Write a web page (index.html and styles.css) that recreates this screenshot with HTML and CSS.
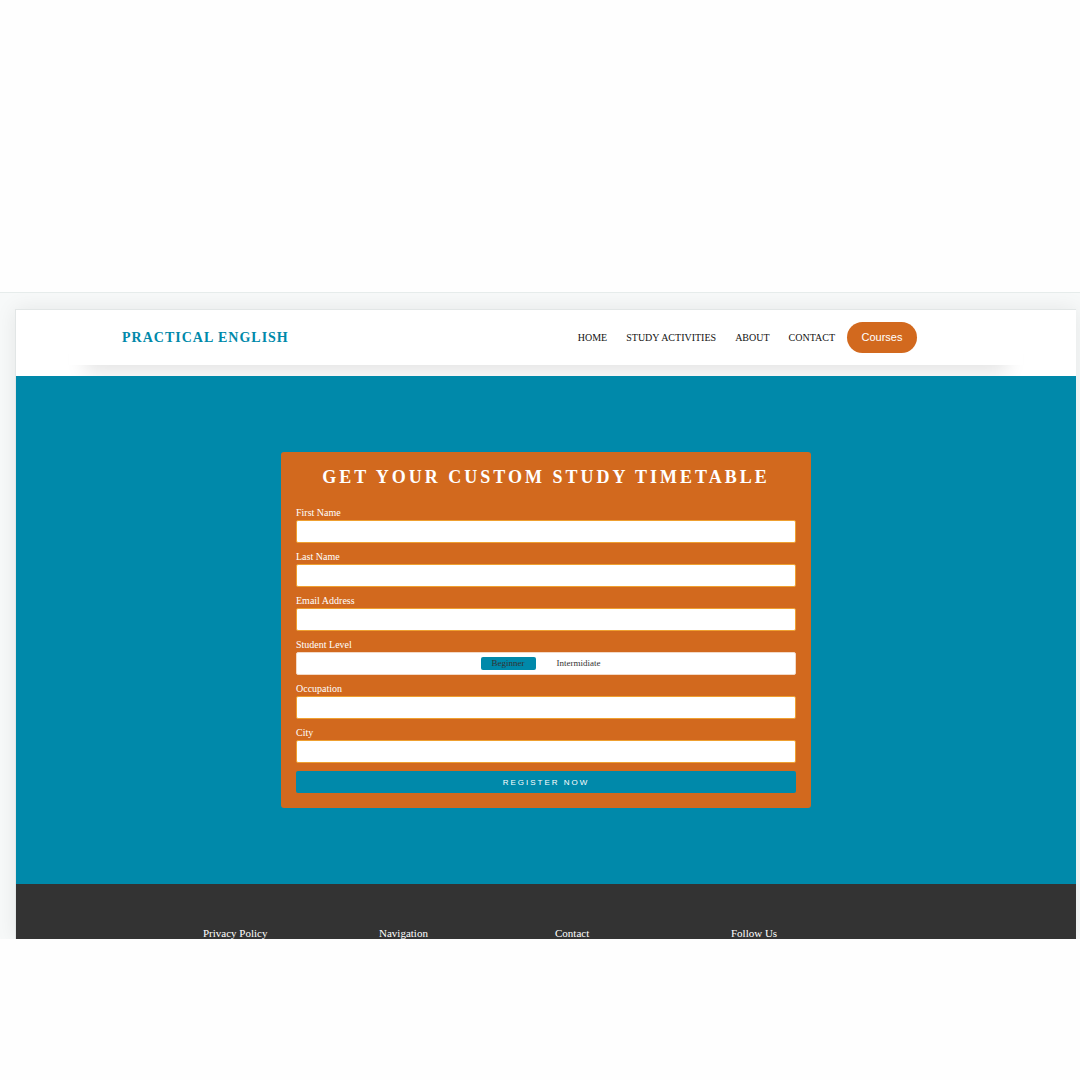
FILE: index.html
```html
<!DOCTYPE html>
<html lang="en">
<head>
  <meta charset="utf-8">
  <meta name="viewport" content="width=device-width, initial-scale=1">
  <title>Practical English</title>
  <link rel="stylesheet" href="styles.css">
</head>
<body>
  <div class="frame">
    <div class="site">
      <header class="header">
        <div class="navbar">
          <a class="logo" href="#">PRACTICAL ENGLISH</a>
          <nav class="menu">
            <a href="#">HOME</a>
            <a href="#">STUDY ACTIVITIES</a>
            <a href="#">ABOUT</a>
            <a href="#">CONTACT</a>
          </nav>
          <button class="courses" type="button">Courses</button>
        </div>
      </header>
      <main class="main">
        <form class="card">
          <h1 class="title">GET YOUR CUSTOM STUDY TIMETABLE</h1>
          <div class="field">
            <label for="first">First Name</label>
            <input class="box" id="first" type="text">
          </div>
          <div class="field">
            <label for="last">Last Name</label>
            <input class="box" id="last" type="text">
          </div>
          <div class="field">
            <label for="email">Email Address</label>
            <input class="box" id="email" type="email">
          </div>
          <div class="field" role="radiogroup" aria-labelledby="level">
            <span class="caption" id="level">Student Level</span>
            <div class="box levels">
              <label class="level"><input type="radio" name="level" checked>Beginner</label>
              <label class="level"><input type="radio" name="level">Intermidiate</label>
            </div>
          </div>
          <div class="field">
            <label for="occupation">Occupation</label>
            <input class="box" id="occupation" type="text">
          </div>
          <div class="field">
            <label for="city">City</label>
            <input class="box" id="city" type="text">
          </div>
          <button class="register" type="submit">REGISTER NOW</button>
        </form>
      </main>
      <footer class="footer">
        <div class="columns">
          <h2>Privacy Policy</h2>
          <h2>Navigation</h2>
          <h2>Contact</h2>
          <h2>Follow Us</h2>
        </div>
      </footer>
    </div>
  </div>
</body>
</html>
```

FILE: styles.css
```css
* {
  box-sizing: border-box;
}

body {
  margin: 0;
  padding-top: 292px;
  background: #fefefe;
  font-family: "Liberation Serif", "Times New Roman", serif;
}

.frame {
  overflow: hidden;
  padding: 16px 4px 0 15px;
  border-top: 1px solid #e6eceb;
  background: #f7f9f9;
}

.site {
  border: 1px solid #e2e6e6;
  border-width: 1px 0 0 1px;
  background: #fff;
  box-shadow: 0 0 20px rgba(0, 0, 0, 0.08);
}

.header {
  padding: 0 5% 11px;
}

.navbar {
  display: flex;
  align-items: center;
  height: 55px;
  padding: 0 106px 0 53px;
  background: #fff;
  box-shadow: 0 22px 20px -16px rgba(0, 0, 0, 0.12);
}

.logo {
  margin-right: auto;
  color: #0089aa;
  font-size: 14px;
  font-weight: bold;
  letter-spacing: 1px;
  text-decoration: none;
}

.menu {
  display: flex;
  gap: 19px;
}

.menu a {
  color: #111;
  font-size: 10px;
  text-decoration: none;
}

.courses {
  width: 70px;
  height: 31px;
  margin-left: 12px;
  padding: 0 0 2px;
  border: 0;
  border-radius: 16px;
  background: #d2691e;
  color: #fff;
  font: 11px "Liberation Sans", Arial, sans-serif;
}

.main {
  padding: 76px 0;
  background: #0089aa;
}

.card {
  width: 50%;
  min-width: 300px;
  margin: 0 auto;
  padding: 15px;
  border-radius: 3px;
  background: #d2691e;
  color: #fff;
}

.title {
  margin: 0 0 20px;
  font-size: 18px;
  line-height: 20px;
  letter-spacing: 3px;
  text-align: center;
}

.field {
  display: flex;
  flex-direction: column;
  gap: 1px;
  margin-bottom: 8px;
  font-size: 10px;
  line-height: 12px;
}

.box {
  width: 100%;
  height: 23px;
  padding: 0 8px;
  border: 1px solid #efa030;
  border-radius: 2px;
  background: #fff;
}

.levels {
  display: flex;
  align-items: center;
  justify-content: center;
  gap: 10px;
  border-color: #f3d9c6;
}

.level {
  padding: 0 11px;
  border-radius: 2px;
  color: #333;
  font-size: 9px;
  line-height: 13px;
}

.level:has(input:checked) {
  background: #0089aa;
}

.level input {
  position: absolute;
  margin: 0;
  opacity: 0;
  appearance: none;
}

.register {
  display: block;
  width: 100%;
  height: 22px;
  padding: 0;
  border: 0;
  border-radius: 2px;
  background: #0089aa;
  color: #fff;
  font: 8px "Liberation Sans", Arial, sans-serif;
  letter-spacing: 2px;
}

.footer {
  padding: 44px 16px 0;
  background: #333;
}

.columns {
  display: grid;
  grid-template-columns: repeat(4, 1fr);
  max-width: 704px;
  margin: 0 auto;
}

.columns h2 {
  margin: 0;
  padding-left: 9px;
  color: #fff;
  font-size: 11px;
  font-weight: normal;
  line-height: 11px;
}
```
